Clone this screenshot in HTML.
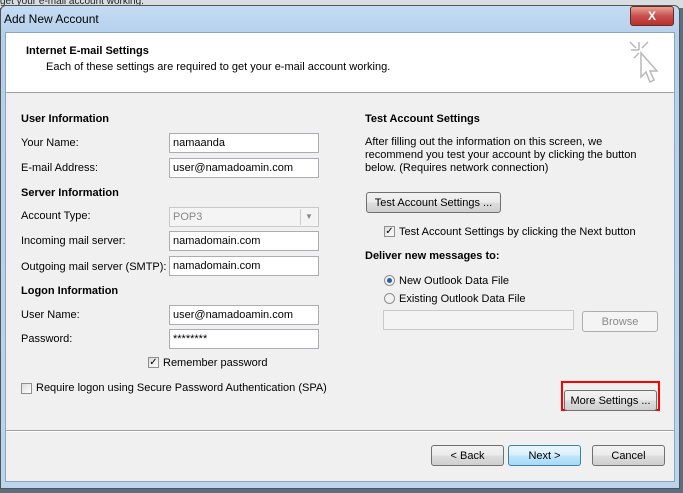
<!DOCTYPE html><html><head><style>
body{margin:0;width:683px;height:493px;overflow:hidden;background:#5c6d7e;font-family:"Liberation Sans",sans-serif;font-size:11px;color:#000;position:relative}
.a{position:absolute}
.l{position:absolute;margin-top:2px}
.in{position:absolute;height:18px;border:1px solid #abadb3;background:#fff;box-sizing:border-box;padding:3px 3px;font-size:11px;line-height:12px}
.btn{position:absolute;height:21px;border:1px solid #707070;border-radius:3px;background:linear-gradient(#f2f2f2,#ebebeb 50%,#dddddd 51%,#cfcfcf);box-sizing:border-box;text-align:center;line-height:19px;font-size:11px}
.cb{position:absolute;width:11px;height:11px;border:1px solid #8f8f8f;background:linear-gradient(135deg,#dcdcdc,#fff);box-sizing:border-box}
.rb{position:absolute;width:11px;height:11px;border:1px solid #8f8f8f;border-radius:50%;background:#f2f2f2;box-sizing:border-box}
</style></head><body>
<div class="a" style="left:0;top:0;width:683px;height:8px;background:#d8dde2"></div>
<div class="a" style="left:0;top:-4px;font-size:10px;color:#222">get your e-mail account working.</div>
<div class="a" style="left:0;top:5px;width:680px;height:484px;background:linear-gradient(#c4dcf3,#b5d0ec 30px,#bcd5ee);border:1px solid #555;border-radius:6px 6px 0 0;box-sizing:border-box"></div>
<div class="a" style="left:4px;top:12px;font-size:12px;color:#000">Add New Account</div>
<div class="a" style="left:630px;top:6px;width:42px;height:18px;border:1px solid #6d2a22;border-radius:3px;background:linear-gradient(#e8a493,#c75050 50%,#b8302a);color:#fff;text-align:center;font-weight:bold;font-size:12px;line-height:18px">X</div>
<div class="a" style="left:5px;top:32px;width:670px;height:450px;background:#f0f0f0;border:1px solid #8ea5c0;box-sizing:border-box"></div>
<div class="a" style="left:6px;top:33px;width:668px;height:59px;background:#fff;border-bottom:1px solid #a0a0a0"></div>
<div class="a" style="left:26px;top:45px;font-weight:bold">Internet E-mail Settings</div>
<div class="a" style="left:46px;top:61px">Each of these settings are required to get your e-mail account working.</div>
<svg class="a" style="left:628px;top:40px" width="36" height="48"><g stroke="#b8b8b8" fill="none" stroke-width="1.5"><path d="M11 2v8M3 10h8M2 2l6 6M20 2l-6 6M6 18l5-5"/><path d="M13 13v24l5-5 4 10 4-2-4-9 7 0z" fill="#fff"/></g></svg>
<div class="l" style="left:21px;top:111px;font-weight:bold">User Information</div>
<div class="l" style="left:21px;top:135px">Your Name:</div><div class="in" style="left:169px;top:133px;width:150px;height:20px">namaanda</div>
<div class="l" style="left:21px;top:160px">E-mail Address:</div><div class="in" style="left:169px;top:158px;width:150px;height:20px">user@namadoamin.com</div>
<div class="l" style="left:21px;top:185px;font-weight:bold">Server Information</div>
<div class="l" style="left:21px;top:208px">Account Type:</div><div class="in" style="left:169px;top:207px;width:150px;height:20px;background:#f4f4f4;color:#888;border-color:#c9c9c9">POP3<span style="position:absolute;right:1px;top:1px;width:16px;height:16px;border-left:1px solid #ccc;text-align:center;font-size:8px;line-height:16px">▼</span></div>
<div class="l" style="left:21px;top:233px">Incoming mail server:</div><div class="in" style="left:169px;top:231px;width:150px;height:20px">namadomain.com</div>
<div class="l" style="left:21px;top:259px">Outgoing mail server (SMTP):</div><div class="in" style="left:169px;top:256px;width:150px;height:20px">namadomain.com</div>
<div class="l" style="left:21px;top:283px;font-weight:bold">Logon Information</div>
<div class="l" style="left:21px;top:307px">User Name:</div><div class="in" style="left:169px;top:305px;width:150px;height:20px">user@namadoamin.com</div>
<div class="l" style="left:21px;top:331px">Password:</div><div class="in" style="left:169px;top:329px;width:150px;height:20px">********</div>
<div class="cb" style="left:148px;top:357px;font-size:10px;line-height:9px;text-align:center">✓</div><div class="a" style="left:163px;top:357px">Remember password</div>
<div class="cb" style="left:21px;top:383px"></div><div class="a" style="left:36px;top:382px">Require logon using Secure Password Authentication (SPA)</div>
<div class="l" style="left:365px;top:111px;font-weight:bold">Test Account Settings</div>
<div class="l" style="left:365px;top:134px;line-height:13px;width:290px">After filling out the information on this screen, we recommend you test your account by clicking the button below. (Requires network connection)</div>
<div class="btn" style="left:366px;top:192px;width:135px;line-height:21px">Test Account Settings ...</div>
<div class="cb" style="left:384px;top:226px;font-size:10px;line-height:9px;text-align:center">✓</div><div class="l" style="left:399px;top:224px">Test Account Settings by clicking the Next button</div>
<div class="l" style="left:365px;top:248px;font-weight:bold">Deliver new messages to:</div>
<div class="rb" style="left:384px;top:275px"><div class="a" style="left:2px;top:2px;width:5px;height:5px;border-radius:50%;background:#2a5ea8"></div></div><div class="l" style="left:399px;top:273px">New Outlook Data File</div>
<div class="rb" style="left:384px;top:293px"></div><div class="l" style="left:399px;top:291px">Existing Outlook Data File</div>
<div class="in" style="left:383px;top:310px;width:191px;height:20px;background:#f4f4f4;border-color:#c9c9c9"></div>
<div class="btn" style="left:582px;top:311px;width:76px;color:#8a8a8a;border-color:#adadad;background:#f4f4f4;line-height:21px">Browse</div>
<div class="a" style="left:561px;top:381px;width:99px;height:30px;border:2px solid #f00;box-sizing:border-box"></div>
<div class="btn" style="left:564px;top:390px;width:93px;line-height:21px">More Settings ...</div>
<div class="a" style="left:6px;top:430px;width:668px;height:1px;background:#a0a0a0;border-bottom:1px solid #fff"></div>
<div class="btn" style="left:431px;top:445px;width:73px;line-height:21px">&lt; Back</div>
<div class="btn" style="left:508px;top:445px;width:73px;line-height:21px;border-color:#3c7fb1;background:linear-gradient(#eaf6fd,#d9f0fc 50%,#bee6fd 51%,#a7d9f5)">Next &gt;</div>
<div class="btn" style="left:592px;top:445px;width:73px;line-height:21px">Cancel</div>
</body></html>
